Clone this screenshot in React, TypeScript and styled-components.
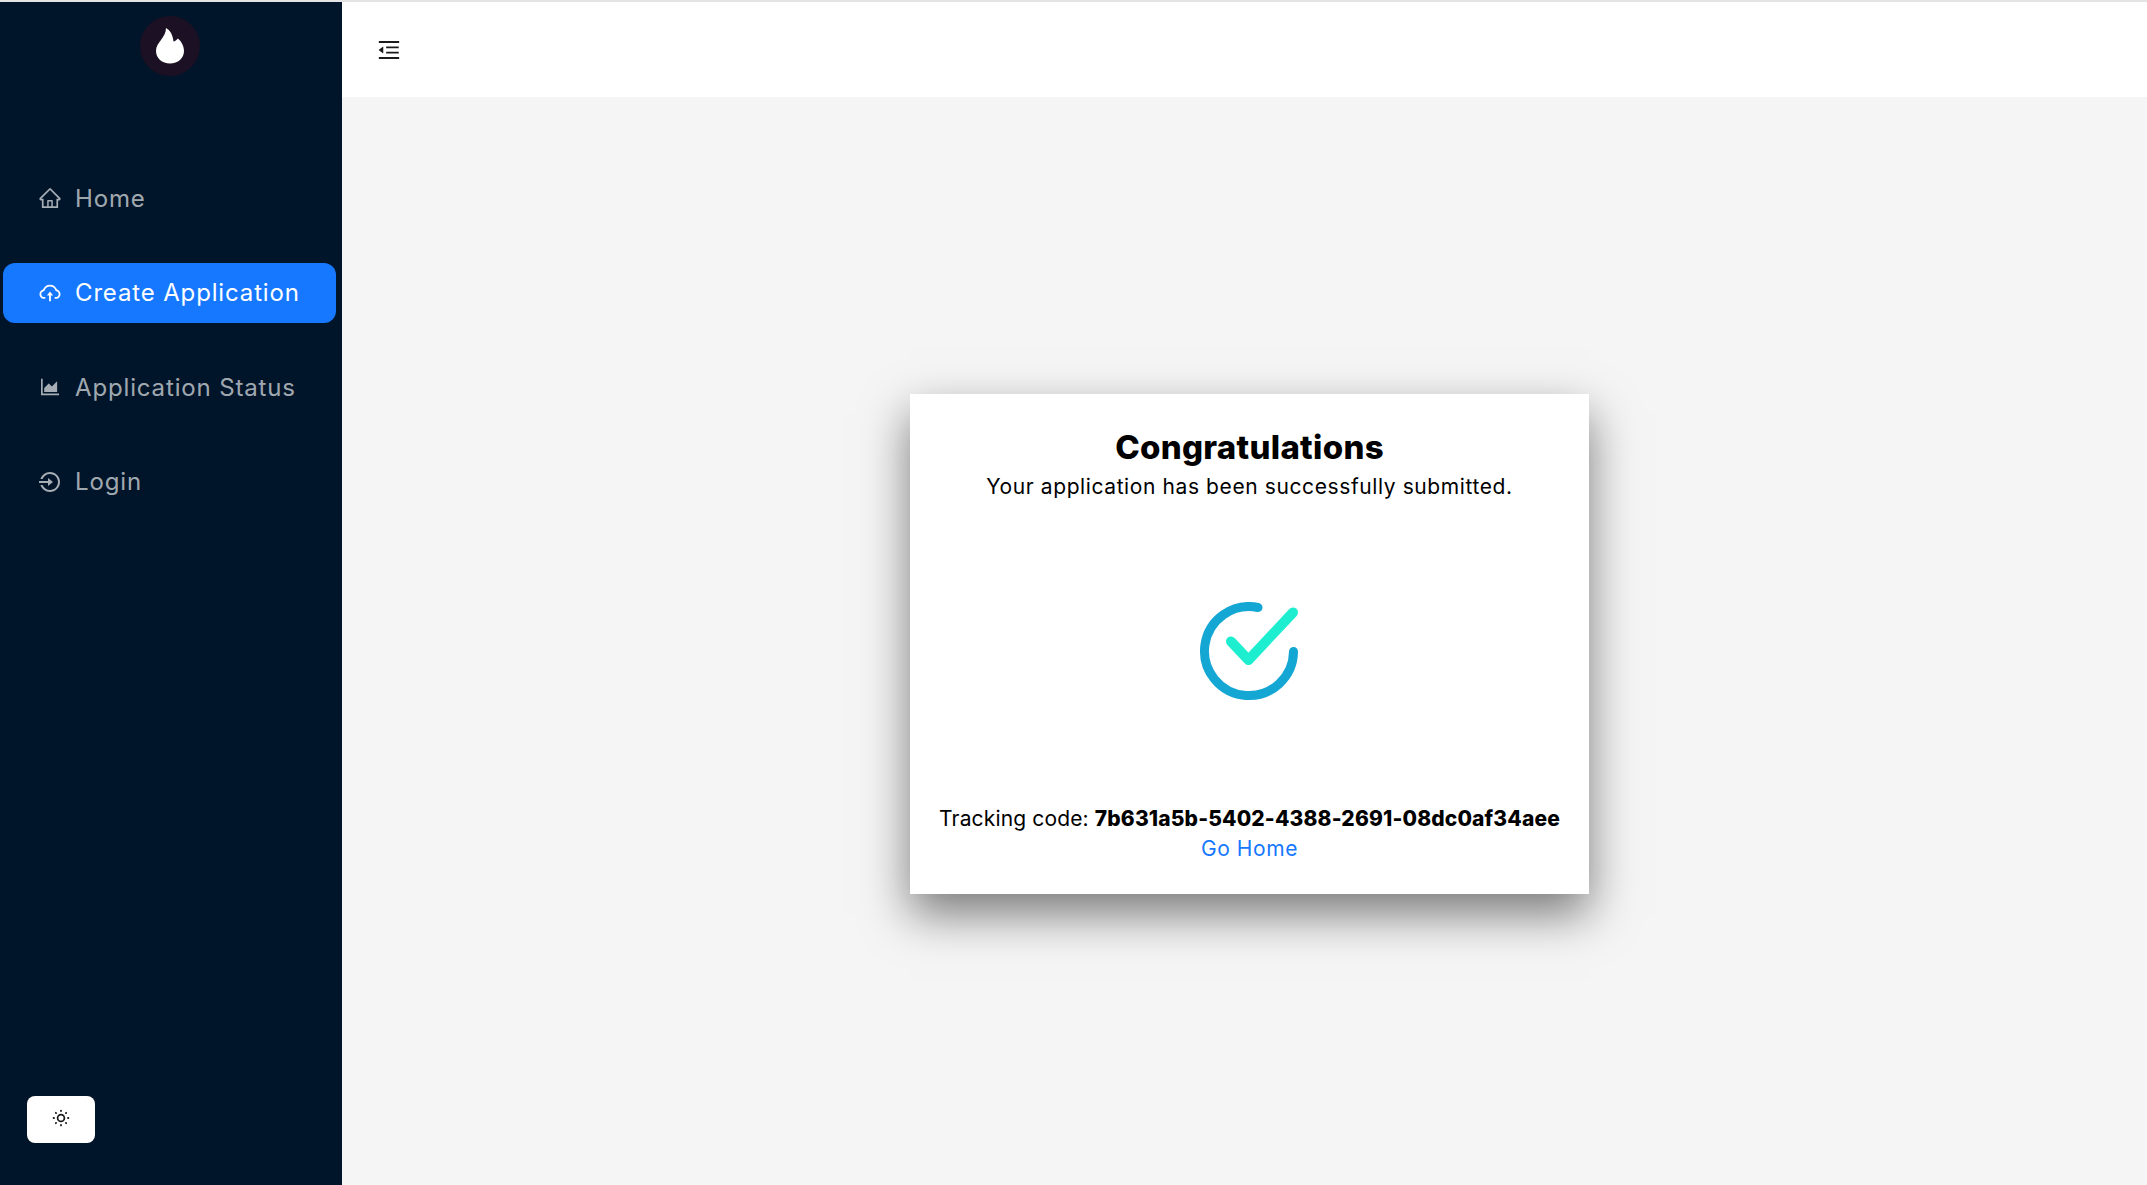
import { type ReactNode } from "react";
import styled, { createGlobalStyle } from "styled-components";
import {
  AiOutlineAreaChart,
  AiOutlineCloudUpload,
  AiOutlineHome,
  AiOutlineMenuFold,
} from "react-icons/ai";
import { RiLoginCircleLine } from "react-icons/ri";

const GlobalStyle = createGlobalStyle`
  html, body {
    margin: 0;
    height: 100%;
    overflow: hidden;
  }
  body {
    font-family: Inter, "Liberation Sans", sans-serif;
    background: #f5f5f5;
  }
`;

type NavEntry = { label: string; icon: ReactNode; active?: boolean };

const navEntries: NavEntry[] = [
  { label: "Home", icon: <AiOutlineHome /> },
  { label: "Create Application", icon: <AiOutlineCloudUpload />, active: true },
  { label: "Application Status", icon: <AiOutlineAreaChart /> },
  { label: "Login", icon: <RiLoginCircleLine /> },
];

const FlameIcon = () => (
  <svg width="28" height="36" viewBox="0 0 28 36" fill="#fff">
    <path d="M10 0C14 2 17 7 17.500 13.500C19 13.500 20.500 12 22 10.500C26 14 28 18.500 28 23C28 30 22 35.500 14 35.500C6 35.500 0 30 0 23C0 14 10 10 10 0Z" />
  </svg>
);

const SunIcon = () => (
  <svg width="18" height="18" viewBox="0 0 18 18" fill="none" stroke="#1b1b1b">
    <circle cx="9" cy="9" r="3.4" strokeWidth="1.7" />
    <g strokeWidth="1.8" strokeLinecap="round">
      <path d="M9 1.6v.4M9 16v.4M1.6 9h.4M16 9h.4M3.800 3.800l.3.3M13.900 13.900l.3.3M3.800 14.200l.3-.3M13.900 4.100l.3-.3" />
    </g>
  </svg>
);

const SuccessIcon = () => (
  <svg width="108" height="108" viewBox="0 0 108 108" fill="none" strokeLinecap="round" strokeLinejoin="round">
    <path d="M63 5.500A44.500 44.500 0 1 0 98.500 49.500" stroke="#14a7d4" strokeWidth="9" />
    <path d="M36 39.500L53.500 58L98 10.500" stroke="#1ceecf" strokeWidth="10" />
  </svg>
);

const App = () => {
  return (
    <Page>
      <GlobalStyle />
      <Sidebar>
        <LogoCircle>
          <FlameIcon />
        </LogoCircle>
        <Nav>
          {navEntries.map((entry) => (
            <NavItem key={entry.label} $active={entry.active}>
              <NavIcon>{entry.icon}</NavIcon>
              {entry.label}
            </NavItem>
          ))}
        </Nav>
        <ThemeButton>
          <SunIcon />
        </ThemeButton>
      </Sidebar>
      <Main>
        <Header>
          <MenuButton>
            <AiOutlineMenuFold />
          </MenuButton>
        </Header>
        <Content>
          <Card>
            <Title>Congratulations</Title>
            <Subtitle>Your application has been successfully submitted.</Subtitle>
            <IconArea>
              <SuccessIcon />
            </IconArea>
            <Tracking>
              Tracking code: <b>7b631a5b-5402-4388-2691-08dc0af34aee</b>
            </Tracking>
            <HomeLink href="#">Go Home</HomeLink>
          </Card>
        </Content>
      </Main>
    </Page>
  );
};
export default App;

const Page = styled.div`
  display: grid;
  grid-template-columns: 342px 1fr;
  height: 1183px;
  border-top: 2px solid #e4e4e4;
`;

const Sidebar = styled.aside`
  display: flex;
  flex-direction: column;
  background: #001529;
`;

const LogoCircle = styled.div`
  display: flex;
  align-items: center;
  justify-content: center;
  align-self: center;
  width: 60px;
  height: 60px;
  margin: 14px 2px 0 0;
  border-radius: 50%;
  background: #1c1024;
`;

const Nav = styled.nav`
  display: flex;
  flex-direction: column;
  gap: 34.5px;
  margin-top: 92px;
`;

const NavItem = styled.a<{ $active?: boolean }>`
  display: flex;
  align-items: center;
  gap: 13px;
  height: 60px;
  margin: 0 6px 0 3px;
  padding-left: 35px;
  border-radius: 12px;
  font-size: 24px;
  letter-spacing: 0.85px;
  color: ${({ $active }) => ($active ? "#fff" : "rgba(255, 255, 255, 0.65)")};
  background: ${({ $active }) => ($active ? "#1677ff" : "transparent")};
`;

const NavIcon = styled.span`
  display: flex;
  font-size: 24px;
`;

const ThemeButton = styled.button`
  display: flex;
  align-items: center;
  justify-content: center;
  width: 68px;
  height: 47px;
  margin: auto 0 42px 27px;
  padding: 0 0 3px;
  border: none;
  border-radius: 8px;
  background: #fff;
`;

const Main = styled.main`
  display: flex;
  flex-direction: column;
  min-width: 0;
`;

const Header = styled.header`
  display: flex;
  align-items: center;
  flex: none;
  height: 95px;
  padding-left: 34px;
  background: #fff;
`;

const MenuButton = styled.span`
  display: flex;
  font-size: 26px;
  color: #1b1b1b;
`;

const Content = styled.section`
  display: flex;
  flex: 1;
  align-items: center;
  justify-content: center;
  padding: 6px 0 0 10px;
`;

const Card = styled.div`
  display: flex;
  flex-direction: column;
  align-items: center;
  box-sizing: border-box;
  width: 679px;
  height: 500px;
  padding: 31px 0 29px;
  background: #fff;
  color: #000;
  box-shadow: 0 20px 44px rgba(0, 0, 0, 0.5);
`;

const Title = styled.h1`
  margin: 0;
  font-size: 33px;
  line-height: 44px;
  font-weight: 800;
  letter-spacing: 0.3px;
`;

const Subtitle = styled.p`
  margin: 0;
  font-size: 21px;
  line-height: 36px;
  letter-spacing: 0.6px;
`;

const IconArea = styled.div`
  display: flex;
  flex: 1;
  align-items: center;
  justify-content: center;
  padding-top: 4px;
  padding-right: 2px;
`;

const Tracking = styled.p`
  margin: 0 0 -2px;
  font-size: 21px;
  line-height: 32px;
  letter-spacing: 0.15px;
  b {
    font-weight: 800;
  }
`;

const HomeLink = styled.a`
  font-size: 21px;
  line-height: 32px;
  letter-spacing: 0.6px;
  color: #1677ff;
  text-decoration: none;
`;
